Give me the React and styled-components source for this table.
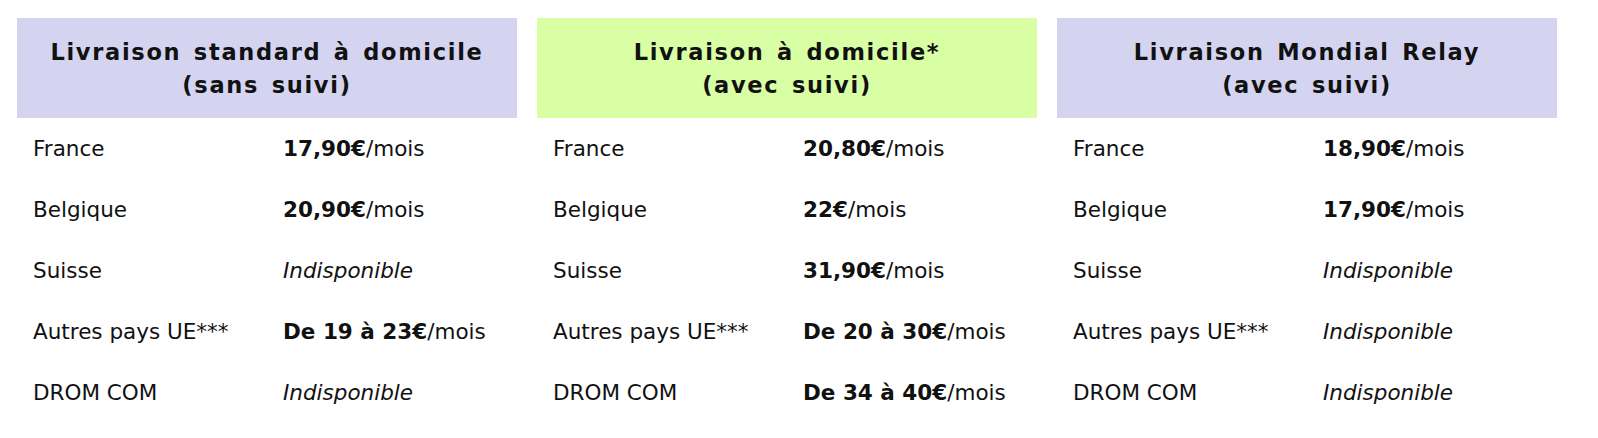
import React from "react";
import styled, { createGlobalStyle } from "styled-components";

const GlobalStyle = createGlobalStyle`
  html, body {
    margin: 0;
    padding: 0;
    background: #ffffff;
    overflow: hidden;
  }
`;

const columns = [
  {
    title: "Livraison standard à domicile",
    sub: "(sans suivi)",
    color: "#d4d4f1",
    rows: [
      ["France", "17,90€"],
      ["Belgique", "20,90€"],
      ["Suisse", null],
      ["Autres pays UE***", "De 19 à 23€"],
      ["DROM COM", null],
    ],
  },
  {
    title: "Livraison à domicile*",
    sub: "(avec suivi)",
    color: "#d8ffa4",
    rows: [
      ["France", "20,80€"],
      ["Belgique", "22€"],
      ["Suisse", "31,90€"],
      ["Autres pays UE***", "De 20 à 30€"],
      ["DROM COM", "De 34 à 40€"],
    ],
  },
  {
    title: "Livraison Mondial Relay",
    sub: "(avec suivi)",
    color: "#d4d4f1",
    rows: [
      ["France", "18,90€"],
      ["Belgique", "17,90€"],
      ["Suisse", null],
      ["Autres pays UE***", null],
      ["DROM COM", null],
    ],
  },
];

const Page = styled.div`
  display: grid;
  grid-template-columns: repeat(3, 500px);
  gap: 20px;
  padding: 18px 17px 0;
  width: 1598px;
  height: 438px;
  box-sizing: border-box;
`;

const Column = styled.div`
  display: flex;
  flex-direction: column;
`;

const Header = styled.div`
  height: 100px;
  flex: none;
  background: ${(p) => p.$bg};
  display: flex;
  flex-direction: column;
  align-items: center;
  justify-content: center;
  font-family: "DejaVu Sans", sans-serif;
  font-weight: 700;
  font-size: 22.5px;
  letter-spacing: 1.7px;
  word-spacing: 3px;
  line-height: 33px;
  color: #111;
  padding-top: 2px;
  box-sizing: border-box;
`;

const Row = styled.div`
  display: grid;
  grid-template-columns: 250px 1fr;
  align-items: center;
  height: 61px;
  flex: none;
  padding-left: 16px;
  font-family: "DejaVu Sans", sans-serif;
  font-size: 21.5px;
  color: #111;
`;

const Price = styled.span`
  b {
    font-weight: 700;
  }
`;

const Unavailable = styled.span`
  font-style: italic;
`;

export default function App() {
  return (
    <>
      <GlobalStyle />
      <Page>
        {columns.map((col) => (
          <Column key={col.title}>
            <Header $bg={col.color}>
              <span>{col.title}</span>
              <span>{col.sub}</span>
            </Header>
            {col.rows.map(([country, price]) => (
              <Row key={country}>
                <span>{country}</span>
                {price ? (
                  <Price>
                    <b>{price}</b>/mois
                  </Price>
                ) : (
                  <Unavailable>Indisponible</Unavailable>
                )}
              </Row>
            ))}
          </Column>
        ))}
      </Page>
    </>
  );
}
